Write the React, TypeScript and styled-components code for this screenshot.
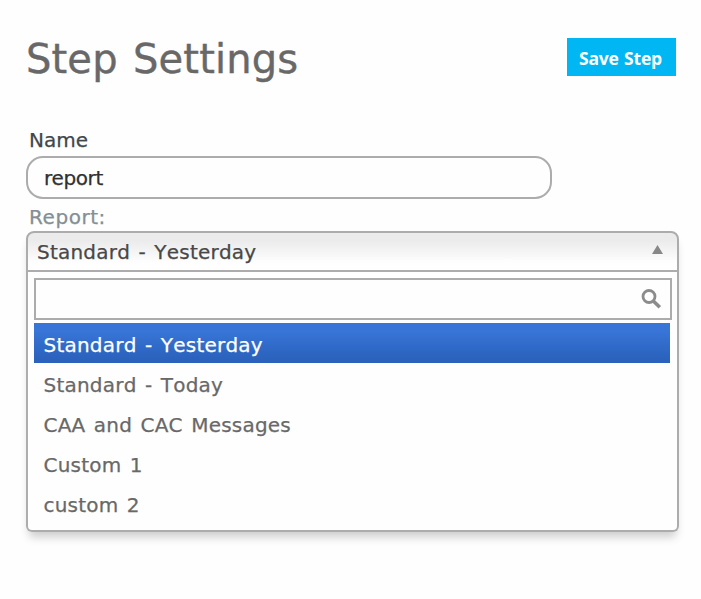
import React, { useState } from "react";
import styled, { createGlobalStyle, css } from "styled-components";

const GlobalStyle = createGlobalStyle`
  *, *::before, *::after { box-sizing: border-box; }
  body { margin: 0; background: #fefefe; font-family: Verdana, "DejaVu Sans", sans-serif; }
`;

const Page = styled.main`
  width: 701px;
  height: 599px;
  padding: 38px 22px 0 26px;
  overflow: hidden;
`;

const Header = styled.header`
  display: flex;
  justify-content: space-between;
  align-items: flex-start;
  height: 86px;
  padding-right: 3px;
`;

const Title = styled.h1`
  margin: -3px 0 0;
  font-size: 40px;
  line-height: 48px;
  font-weight: 400;
  letter-spacing: 0.15px;
  word-spacing: 2.5px;
  color: #686868;
  -webkit-text-stroke: 0.4px currentColor;
  white-space: nowrap;
`;

const SaveButton = styled.button`
  width: 109px;
  height: 38px;
  padding: 2px 2px 0 0;
  border: 0;
  background: #00b7f3;
  color: #fff;
  font: 700 17.5px/36px "Open Sans", sans-serif;
  letter-spacing: -0.2px;
  word-spacing: 1px;
  white-space: nowrap;
`;

const Label = styled.label<{ $muted?: boolean }>`
  display: block;
  height: 32px;
  padding-left: 3px;
  font-size: 20px;
  line-height: 32px;
  color: ${(p) => (p.$muted ? "#838e95" : "#40474c")};
  -webkit-text-stroke: 0.25px currentColor;
  ${(p) => p.$muted && css`margin-top: 3px; height: 29px; line-height: 31px; letter-spacing: 0.55px;`}
`;

const NameInput = styled.input`
  display: block;
  width: 526px;
  height: 43px;
  padding: 0 16px 0 16px;
  border: 2px solid #acacac;
  border-radius: 17px;
  outline: none;
  background: #fefefe;
  color: #303030;
  font: 20px "DejaVu Sans", sans-serif;
  letter-spacing: -0.35px;
  -webkit-text-stroke: 0.25px currentColor;
`;

const Select = styled.div`
  width: 653px;
  height: 301px;
  border-radius: 8px 8px 6px 6px;
  box-shadow: 0 8px 10px -3px rgba(0, 0, 0, 0.2);
`;

const listText = css`
  font-size: 20px;
  font-kerning: none;
  letter-spacing: 0.22px;
  word-spacing: 1.8px;
  -webkit-text-stroke: 0.25px currentColor;
`;

const SelectTrigger = styled.div`
  display: flex;
  align-items: center;
  justify-content: space-between;
  height: 41px;
  padding: 0 14px 0 9px;
  border: 2px solid #acacac;
  border-radius: 8px 8px 0 0;
  background: linear-gradient(#ebebeb 20%, #fefefe 80%);
  color: #484848;
  ${listText}
`;

const Arrow = styled.svg`
  display: block;
  width: 11px;
  height: 9px;
  margin-bottom: 4px;
`;

const Dropdown = styled.div`
  height: 260px;
  padding: 6px 6px 0;
  border: 2px solid #acacac;
  border-top: 0;
  border-radius: 0 0 6px 6px;
  background: #fefefe;
`;

const SearchBox = styled.div`
  display: flex;
  align-items: center;
  width: 638px;
  height: 42px;
  padding-right: 8px;
  border: 2px solid #acacac;
`;

const SearchInput = styled.input`
  flex: 1;
  min-width: 0;
  height: 100%;
  padding: 0 8px;
  border: 0;
  outline: none;
  background: transparent;
  font: 20px "DejaVu Sans", sans-serif;
`;

const SearchIcon = styled.svg`
  display: block;
  width: 21px;
  height: 22px;
`;

const Options = styled.ul`
  width: 636px;
  margin: 3px 0 0;
  padding: 0;
  list-style: none;
`;

const Option = styled.li<{ $active: boolean }>`
  height: 40px;
  padding-left: 9.5px;
  line-height: 44px;
  white-space: nowrap;
  color: ${(p) => (p.$active ? "#fff" : "#686868")};
  background: ${(p) => (p.$active ? "linear-gradient(#3875d7 20%, #2a62bc 90%)" : "none")};
  ${listText}
`;

const reports = ["Standard - Yesterday", "Standard - Today", "CAA and CAC Messages", "Custom 1", "custom 2"];

export default function App() {
  const [name, setName] = useState("report");
  const [query, setQuery] = useState("");
  const [selected, setSelected] = useState(reports[0]);

  return (
    <Page>
      <GlobalStyle />
      <Header>
        <Title>Step Settings</Title>
        <SaveButton type="button">Save Step</SaveButton>
      </Header>
      <Label htmlFor="step-name">Name</Label>
      <NameInput id="step-name" value={name} onChange={(e) => setName(e.target.value)} />
      <Label htmlFor="report-search" $muted>Report:</Label>
      <Select>
        <SelectTrigger>
          <span>{selected}</span>
          <Arrow viewBox="0 0 11 9" aria-hidden="true">
            <path d="M5.5 0 11 9H0Z" fill="#888" />
          </Arrow>
        </SelectTrigger>
        <Dropdown>
          <SearchBox>
            <SearchInput id="report-search" value={query} onChange={(e) => setQuery(e.target.value)} />
            <SearchIcon viewBox="0 0 21 22" fill="none" stroke="#8c8c8c" aria-hidden="true">
              <circle cx="8" cy="8.5" r="6" strokeWidth="2.8" />
              <path d="m12.3 13 6.5 6.3" strokeWidth="3.6" />
            </SearchIcon>
          </SearchBox>
          <Options>
            {reports
              .filter((r) => r.toLowerCase().includes(query.toLowerCase()))
              .map((r) => (
                <Option key={r} $active={r === selected} onClick={() => setSelected(r)}>
                  {r}
                </Option>
              ))}
          </Options>
        </Dropdown>
      </Select>
    </Page>
  );
}
